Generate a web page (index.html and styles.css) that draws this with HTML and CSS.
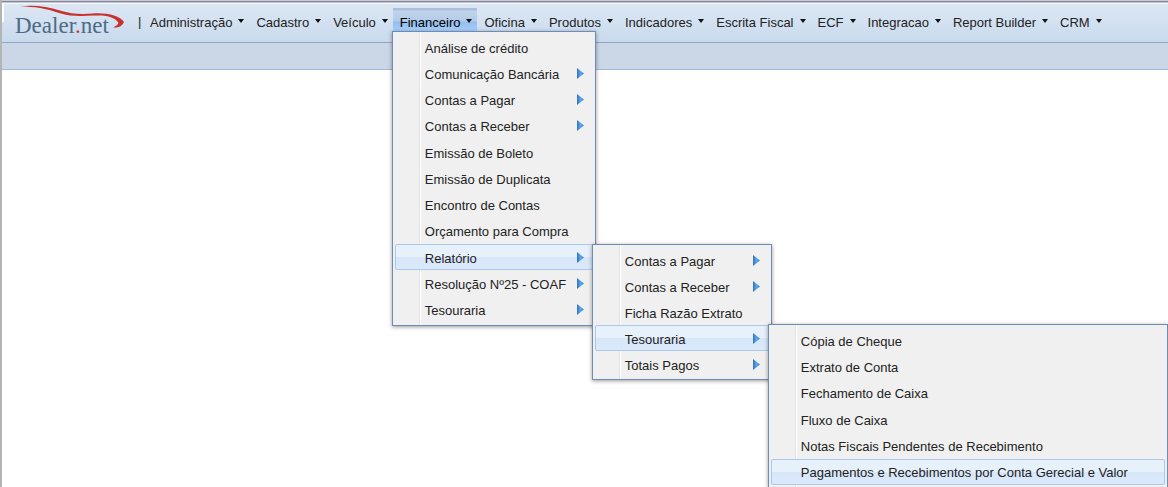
FILE: index.html
```html
<!DOCTYPE html>
<html lang="pt-BR">
<head>
<meta charset="utf-8">
<title>Dealer.net</title>
<link rel="stylesheet" href="styles.css">
</head>
<body>
<svg class="defs" width="0" height="0" aria-hidden="true">
  <linearGradient id="arrow-fill" x1="0" y1="0" x2="1" y2="0">
    <stop offset="0" stop-color="#2f74c0"/>
    <stop offset="0.5" stop-color="#5fa5ea"/>
    <stop offset="1" stop-color="#3d86d4"/>
  </linearGradient>
  <symbol id="arrow" viewBox="0 0 7 11"><path d="M0 0V11L7 5.500Z" fill="url(#arrow-fill)"/></symbol>
</svg>
<header class="topbar">
  <a class="logo" href="#" aria-label="Dealer.net">
    <svg class="swoosh" viewBox="0 0 112 30" aria-hidden="true">
      <path d="M5 3.500C18 1.500 32 3.500 45 7.500C56 11 66 11.500 78 10.500C92 9.500 105 13 109 19C107 23 104 25 98 24.500C102 22.500 104 21 103 19C99 13.500 90 12 79 12.500C68 13 57 14 44 10C31 5.500 20 3.500 5 3.500Z" fill="#c9302e"/>
    </svg>
    <span class="logo-text">Dealer<span class="dot">.</span>net</span>
  </a>
  <nav aria-label="Principal">
    <ul class="menubar">
      <li class="divider">|</li>
      <li><button class="top" type="button">Administração</button></li>
      <li><button class="top" type="button">Cadastro</button></li>
      <li><button class="top" type="button">Veículo</button></li>
      <li class="host"><button class="top open" type="button" aria-expanded="true">Financeiro</button>
        <ul class="menu menu-financeiro">
          <li><a class="item" href="#">Análise de crédito</a></li>
          <li><a class="item" href="#">Comunicação Bancária<svg class="arrow"><use href="#arrow"/></svg></a></li>
          <li><a class="item" href="#">Contas a Pagar<svg class="arrow"><use href="#arrow"/></svg></a></li>
          <li><a class="item" href="#">Contas a Receber<svg class="arrow"><use href="#arrow"/></svg></a></li>
          <li><a class="item" href="#">Emissão de Boleto</a></li>
          <li><a class="item" href="#">Emissão de Duplicata</a></li>
          <li><a class="item" href="#">Encontro de Contas</a></li>
          <li><a class="item" href="#">Orçamento para Compra</a></li>
          <li class="host"><a class="item active" href="#">Relatório<svg class="arrow"><use href="#arrow"/></svg></a>
            <ul class="menu menu-relatorio">
              <li><a class="item" href="#">Contas a Pagar<svg class="arrow"><use href="#arrow"/></svg></a></li>
              <li><a class="item" href="#">Contas a Receber<svg class="arrow"><use href="#arrow"/></svg></a></li>
              <li><a class="item" href="#">Ficha Razão Extrato</a></li>
              <li class="host"><a class="item active" href="#">Tesouraria<svg class="arrow"><use href="#arrow"/></svg></a>
                <ul class="menu menu-tesouraria">
                  <li><a class="item" href="#">Cópia de Cheque</a></li>
                  <li><a class="item" href="#">Extrato de Conta</a></li>
                  <li><a class="item" href="#">Fechamento de Caixa</a></li>
                  <li><a class="item" href="#">Fluxo de Caixa</a></li>
                  <li><a class="item" href="#">Notas Fiscais Pendentes de Recebimento</a></li>
                  <li><a class="item active" href="#">Pagamentos e Recebimentos por Conta Gerecial e Valor</a></li>
                </ul>
              </li>
              <li><a class="item" href="#">Totais Pagos<svg class="arrow"><use href="#arrow"/></svg></a></li>
            </ul>
          </li>
          <li><a class="item" href="#">Resolução Nº25 - COAF<svg class="arrow"><use href="#arrow"/></svg></a></li>
          <li><a class="item" href="#">Tesouraria<svg class="arrow"><use href="#arrow"/></svg></a></li>
        </ul>
      </li>
      <li><button class="top" type="button">Oficina</button></li>
      <li><button class="top" type="button">Produtos</button></li>
      <li><button class="top" type="button">Indicadores</button></li>
      <li><button class="top" type="button">Escrita Fiscal</button></li>
      <li><button class="top" type="button">ECF</button></li>
      <li><button class="top" type="button">Integracao</button></li>
      <li><button class="top" type="button">Report Builder</button></li>
      <li><button class="top" type="button">CRM</button></li>
    </ul>
  </nav>
</header>
<div class="subbar"></div>
<main></main>
</body>
</html>
```
FILE: styles.css
```css
* { box-sizing: border-box; }
html { height: 100%; overflow: hidden; }
body {
  margin: 0;
  min-height: 100%;
  border-left: 2px solid #b4b4b4;
  background: #fff;
  color: #222;
  font: 13px/16px "Liberation Sans", Arial, sans-serif;
}
ul { list-style: none; margin: 0; padding: 0; }
.defs { position: absolute; }

.topbar {
  display: flex;
  align-items: flex-start;
  height: 43px;
  padding-left: 13px;
  border-top: 1px solid #c9c9dc;
  border-bottom: 1px solid #8fa5c4;
  background:
    linear-gradient(#fff, #fff) 0 3px / 2px 18px no-repeat,
    linear-gradient(#85859a 0 1px, #c3c6cc 1px 2px, #f4f7fb 2px 3px, #dce7f4 3px, #c9daed 100%);
}
.logo {
  position: relative;
  width: 112px;
  padding-top: 12px;
  color: #4c6b84;
  font: 23px/26px "Liberation Serif", "Times New Roman", serif;
  text-decoration: none;
}
.dot { color: #c9302e; }
.swoosh { position: absolute; left: 0; top: 2px; width: 112px; height: 30px; }

.menubar { display: flex; align-items: flex-start; padding-top: 7px; }
.divider { width: 16px; padding: 6px 0 0 11px; }
.host { position: relative; }
.top {
  display: flex;
  align-items: center;
  gap: 6px;
  height: 23px;
  padding: 6px 5px 0 7px;
  border: 0;
  background: none;
  color: inherit;
  font: inherit;
}
.top::after {
  content: "";
  border: 3px solid transparent;
  border-top: 4px solid #111;
  border-bottom: 0;
  margin-bottom: 4px;
}
.top.open {
  color: #000;
  background: linear-gradient(#a9bfdd 0 2px, #c1d3ea 3px, #b3cbe8 13px, #94bdee 14px, #a9d0fb 100%);
}

.subbar { height: 27px; background: #cbd6e7; border-bottom: 1px solid #9fb9dc; }

.menu {
  position: absolute;
  display: flex;
  flex-direction: column;
  padding: 2px;
  border: 1px solid #718bb7;
  background: linear-gradient(90deg, #f0f0f0 26px, #e3e3e3 26px 27px, #fff 27px 28px, #f0f0f0 28px);
  box-shadow: 0 1px 4px rgba(0, 0, 0, .4);
}
.menu > li { display: flex; flex: 1; }
.menu-financeiro { left: -1px; top: 23px; width: 204px; min-height: 295px; z-index: 1; }
.menu-relatorio { left: 197px; top: 0; width: 180px; z-index: 2; }
.menu-tesouraria { left: 173px; top: -1px; width: 400px; min-height: 164px; z-index: 3; }
.item {
  display: flex;
  flex: 1;
  align-items: center;
  justify-content: space-between;
  min-height: 26px;
  padding: 3px 8px 0 29px;
  border: 1px solid transparent;
  color: #222;
  text-decoration: none;
  white-space: nowrap;
}
.item.active {
  border-color: #aac8ee;
  border-radius: 2px;
  background: linear-gradient(#e7f1fb 0 48%, #d7e6f9 50%, #dbe9fb 100%);
}
.arrow { flex: none; width: 7px; height: 11px; margin-bottom: 3px; }
```
